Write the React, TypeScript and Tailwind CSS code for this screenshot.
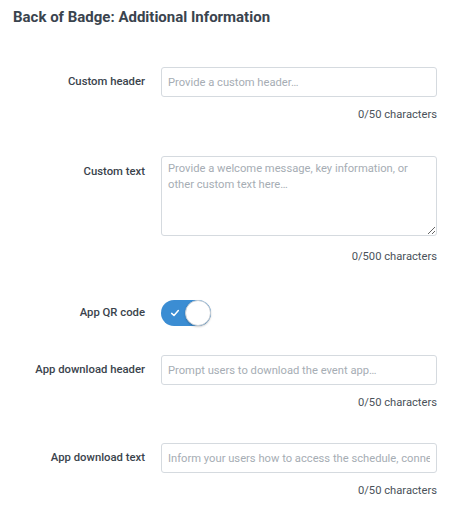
import { useState } from "react";

const font = { fontFamily: "Roboto, 'Noto Sans', sans-serif" };

function Counter({ max }: { max: number }) {
  return (
    <div className="ml-[161px] mt-[10px] w-[276px] text-right text-[11.2px] leading-[16px] text-[#4a525a]">
      0/{max} characters
    </div>
  );
}

function TextRow({ label, placeholder }: { label: string; placeholder: string }) {
  return (
    <div className="flex items-center gap-4">
      <label className="w-[145px] text-right text-[11.3px] font-medium text-[#3a434c]">{label}</label>
      <input
        placeholder={placeholder}
        className="h-[30px] w-[276px] rounded-[3px] border border-[#d5dadf] bg-white px-[6px] text-[11.2px] text-[#2f3840] outline-none placeholder:text-[#a6adb4]"
      />
    </div>
  );
}

export default function App() {
  const [qr, setQr] = useState(true);

  return (
    <div className="h-[511px] w-[467px] bg-white" style={font}>
      <h2 className="pl-[13px] pt-[7px] text-[15px] font-bold leading-[20px] text-[#3a444e]">
        Back of Badge: Additional Information
      </h2>

      <div className="mt-[40px]">
        <TextRow label="Custom header" placeholder="Provide a custom header…" />
        <Counter max={50} />
      </div>

      <div className="mt-[33px]">
        <div className="flex items-start gap-4">
          <label className="w-[145px] pt-[8px] text-right text-[11.3px] font-medium text-[#3a434c]">Custom text</label>
          <textarea
            placeholder="Provide a welcome message, key information, or other custom text here…"
            className="block h-[80px] w-[276px] rounded-[3px] border border-[#d5dadf] bg-white px-[6px] py-[4px] text-[11.2px] leading-[16px] text-[#2f3840] outline-none placeholder:text-[#a6adb4]"
          />
        </div>
        <div className="mt-[13px]">
          <Counter max={500} />
        </div>
      </div>

      <div className="mt-[35px] flex items-center gap-4">
        <label className="w-[145px] text-right text-[11.3px] font-medium text-[#3a434c]">App QR code</label>
        <button
          onClick={() => setQr(!qr)}
          className={`relative h-[26px] w-[50px] rounded-full ${qr ? "bg-[#3b8dd3]" : "bg-[#d5dadf]"}`}
        >
          <svg
            viewBox="0 0 12 12"
            className="absolute left-[9px] top-[8px] h-[10px] w-[10px]"
            fill="none"
            stroke="white"
            strokeWidth="1.8"
            strokeLinecap="round"
            strokeLinejoin="round"
          >
            <path d="M2 6.5 L4.8 9 L10 3" />
          </svg>
          <span
            className={`absolute top-0 h-[26px] w-[26px] rounded-full border border-[#c9cfd5] bg-white shadow-[0_1px_2px_rgba(0,0,0,0.2)] ${
              qr ? "right-0" : "left-0"
            }`}
          />
        </button>
      </div>

      <div className="mt-[29px]">
        <TextRow label="App download header" placeholder="Prompt users to download the event app…" />
        <Counter max={50} />
      </div>

      <div className="mt-[32px]">
        <TextRow
          label="App download text"
          placeholder="Inform your users how to access the schedule, connect with attendees and more…"
        />
        <Counter max={50} />
      </div>
    </div>
  );
}
